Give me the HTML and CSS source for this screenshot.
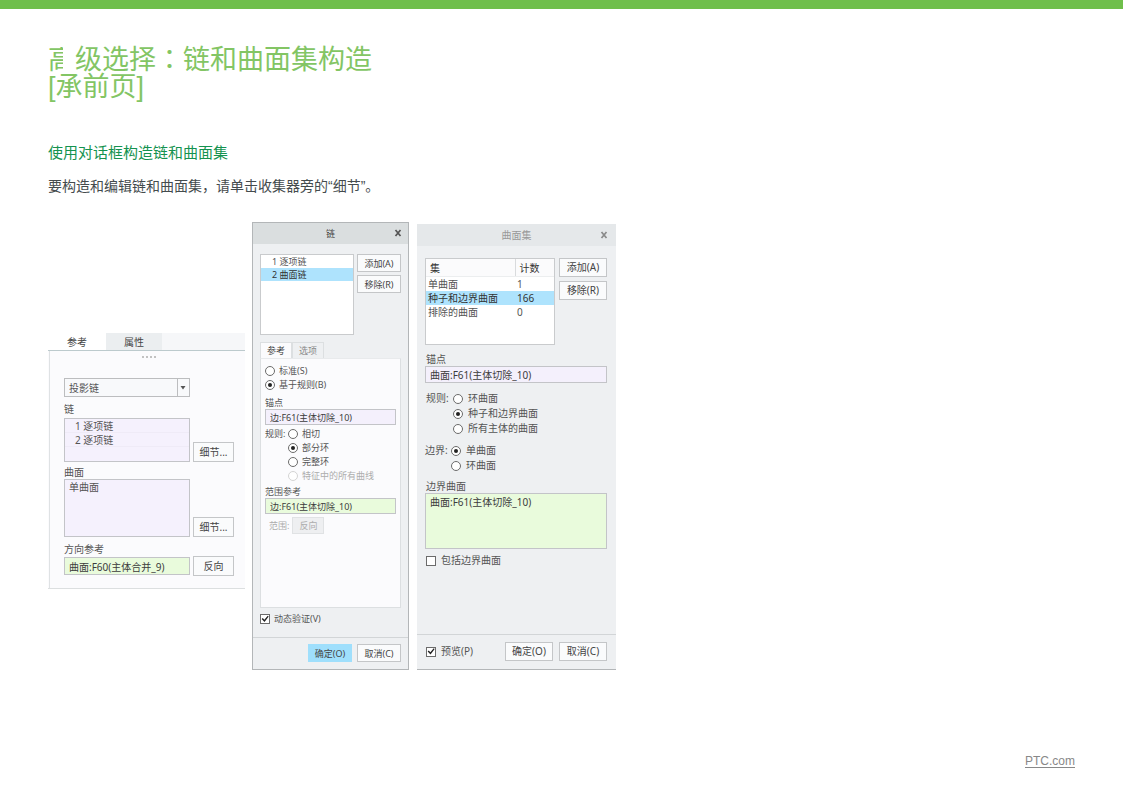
FILE: index.html
```html
<!DOCTYPE html>
<html lang="zh-CN">
<head>
<meta charset="utf-8">
<meta name="viewport" content="width=device-width, initial-scale=1">
<title>高级选择：链和曲面集构造</title>
<link rel="stylesheet" href="styles.css">
</head>
<body>
<main class="content">
  <h1 class="title"><span class="title-cut">高</span>级选择<span class="mid" lang="zh-TW">：</span>链和曲面集构造<br>[承前页]</h1>
  <h2 class="subtitle">使用对话框构造链和曲面集</h2>
  <p class="intro">要构造和编辑链和曲面集，请单击收集器旁的<span class="quote">“</span>细节<span class="quote">”</span>。</p>

  <div class="dialogs">
    <section class="panel" aria-label="参考">
      <div class="panel-tabs" role="tablist">
        <button class="panel-tab panel-tab-on" role="tab" aria-selected="true">参考</button>
        <button class="panel-tab" role="tab" aria-selected="false">属性</button>
      </div>
      <div class="panel-body">
        <div class="grip"><i></i><i></i><i></i><i></i></div>
        <div class="pick">
          <select class="pick-select" aria-label="链类型"><option>投影链</option></select>
          <svg class="pick-arrow" viewBox="0 0 12 17" aria-hidden="true"><path d="M0.5 0V17" stroke="#bcbdbf"/><path d="M3.500 7H8.500L6 10.500Z" fill="#555"/></svg>
        </div>
        <div class="label label-first" id="p-chain">链</div>
        <div class="pair">
          <ul class="collector chain-list" aria-labelledby="p-chain"><li>1 逐项链</li><li>2 逐项链</li></ul>
          <button class="btn">细节...</button>
        </div>
        <div class="label label-second" id="p-surf">曲面</div>
        <div class="pair">
          <ul class="collector surf-list" aria-labelledby="p-surf"><li>单曲面</li></ul>
          <button class="btn">细节...</button>
        </div>
        <label class="label label-third" for="p-dir">方向参考</label>
        <div class="pair pair-center">
          <input class="field green" id="p-dir" value="曲面:F60(主体合并_9)">
          <button class="btn">反向</button>
        </div>
      </div>
    </section>

    <section class="dialog chain" aria-label="链">
      <header class="bar">链<button class="close" aria-label="关闭"><svg viewBox="0 0 8 8"><path d="M1.500 1L6.500 7M6.500 1L1.500 7" stroke="#555" stroke-width="1.700"/></svg></button></header>
      <div class="dialog-body">
        <div class="top">
          <ul class="list"><li>1 逐项链</li><li class="picked">2 曲面链</li></ul>
          <div class="actions"><button class="btn">添加(A)</button><button class="btn">移除(R)</button></div>
        </div>
        <div class="tabs" role="tablist">
          <button class="tab tab-on" role="tab" aria-selected="true">参考</button>
          <button class="tab" role="tab" aria-selected="false">选项</button>
        </div>
        <div class="box">
          <label class="option"><input type="radio" name="kind">标准(S)</label>
          <label class="option"><input type="radio" name="kind" checked>基于规则(B)</label>
          <label class="label" for="c-anchor">锚点</label>
          <input class="field lilac" id="c-anchor" value="边:F61(主体切除_10)">
          <div class="rules">
            <span class="rules-name">规则:</span>
            <div role="radiogroup" aria-label="规则">
              <label class="option"><input type="radio" name="rule">相切</label>
              <label class="option"><input type="radio" name="rule" checked>部分环</label>
              <label class="option"><input type="radio" name="rule">完整环</label>
              <label class="option off"><input type="radio" name="rule" disabled>特征中的所有曲线</label>
            </div>
          </div>
          <label class="label label-extent" for="c-extent">范围参考</label>
          <input class="field green" id="c-extent" value="边:F61(主体切除_10)">
          <div class="extent off"><span>范围:</span><button class="btn" disabled>反向</button></div>
        </div>
        <label class="option verify"><input type="checkbox" checked>动态验证(V)</label>
      </div>
      <footer class="foot"><button class="btn primary">确定(O)</button><button class="btn">取消(C)</button></footer>
    </section>

    <section class="dialog surfset" aria-label="曲面集">
      <header class="bar">曲面集<button class="close" aria-label="关闭"><svg viewBox="0 0 8 8"><path d="M1.500 1L6.500 7M6.500 1L1.500 7" stroke="#8a8a8a" stroke-width="1.700"/></svg></button></header>
      <div class="dialog-body">
        <div class="top">
          <div class="table-box">
            <table class="sets">
              <thead><tr><th>集</th><th class="count">计数</th></tr></thead>
              <tbody>
                <tr><td>单曲面</td><td>1</td></tr>
                <tr class="picked"><td>种子和边界曲面</td><td>166</td></tr>
                <tr><td>排除的曲面</td><td>0</td></tr>
              </tbody>
            </table>
          </div>
          <div class="actions"><button class="btn">添加(A)</button><button class="btn">移除(R)</button></div>
        </div>
        <label class="label" for="s-anchor">锚点</label>
        <input class="field lilac" id="s-anchor" value="曲面:F61(主体切除_10)">
        <div class="rules">
          <span class="rules-name">规则:</span>
          <div role="radiogroup" aria-label="规则">
            <label class="option"><input type="radio" name="srule">环曲面</label>
            <label class="option"><input type="radio" name="srule" checked>种子和边界曲面</label>
            <label class="option"><input type="radio" name="srule">所有主体的曲面</label>
          </div>
        </div>
        <div class="rules bounds">
          <span class="rules-name">边界:</span>
          <div role="radiogroup" aria-label="边界">
            <label class="option"><input type="radio" name="bound" checked>单曲面</label>
            <label class="option"><input type="radio" name="bound">环曲面</label>
          </div>
        </div>
        <label class="label label-bound" for="s-bound">边界曲面</label>
        <textarea class="field green area" id="s-bound">曲面:F61(主体切除_10)</textarea>
        <label class="option include"><input type="checkbox">包括边界曲面</label>
      </div>
      <footer class="foot"><label class="option preview"><input type="checkbox" checked>预览(P)</label><button class="btn">确定(O)</button><button class="btn">取消(C)</button></footer>
    </section>
  </div>
</main>
<footer class="page-foot"><a href="#">PTC.com</a></footer>
</body>
</html>
```

FILE: styles.css
```css
* { box-sizing: border-box; }

body {
  margin: 0;
  min-height: 100vh;
  display: flex;
  flex-direction: column;
  border-top: 9px solid #6fbf4b;
  background: #fff;
  font-family: "Noto Sans", "Noto Sans CJK SC", sans-serif;
  color: #555;
}

button, input, select, textarea { font: inherit; color: inherit; margin: 0; }
ul { list-style: none; margin: 0; padding: 0; }

.content { flex: 1; padding: 38px 48px 0; }

.title {
  margin: 0;
  font: 400 27px/27px "Liberation Sans", "Noto Sans CJK SC", sans-serif;
  color: #83c564;
}
.title-cut {
  display: inline-block;
  width: 15px;
  height: 27px;
  margin-right: 12px;
  overflow: hidden;
  vertical-align: top;
}
.mid { font-family: "Noto Sans CJK TC", sans-serif; line-height: 0; }

.subtitle {
  margin: 42px 0 0;
  font: 400 15px/20px "Liberation Sans", "Noto Sans CJK SC", sans-serif;
  color: #14924f;
}
.intro {
  margin: 13px 0 0;
  font: 14px/20px "Liberation Sans", "Noto Sans CJK SC", sans-serif;
  color: #444b4d;
}
.quote { line-height: 0; }

.dialogs { display: flex; align-items: flex-start; margin-top: 26px; }

/* shared controls */
.label { display: block; line-height: 13px; }

.field {
  display: block;
  width: 100%;
  height: 16px;
  padding: 0 4px;
  border: 1px solid #c3c4c8;
  border-radius: 0;
  outline: 0;
  color: #3c3c3c;
}
.green { background: #e9fbdc; }
.lilac { background: #f4f0fc; }

.btn {
  height: 19px;
  padding: 0;
  border: 1px solid #c4c6c8;
  background: #fafbfc;
  color: #444;
  text-align: center;
  line-height: 15px;
  white-space: nowrap;
}
.primary { background: #9fdffc; border-color: #9fdffc; }

.option { display: flex; align-items: center; line-height: 14px; height: 14px; white-space: nowrap; }
.option input {
  appearance: none;
  flex: none;
  display: grid;
  place-items: center;
  width: 10px;
  height: 10px;
  margin-right: 4px;
  border: 1px solid #6b6b6b;
  background: #fff;
}
.option input[type="radio"] { border-radius: 50%; }
.option input[type="radio"]:checked::before {
  content: "";
  width: 4px;
  height: 4px;
  border-radius: 50%;
  background: #222;
}
.option input[type="checkbox"]:checked::before {
  content: "";
  width: 8px;
  height: 8px;
  background: #222;
  clip-path: polygon(8% 50%, 22% 36%, 42% 60%, 84% 10%, 96% 20%, 44% 86%);
}
.off { color: #adadad; }
.option.off input { border-color: #d4d4d4; }
.picked { background: #aee3fd; color: #333; }

/* reference panel */
.panel {
  flex: 0 1 197px;
  margin: 111px 7px 0 0;
  background: #fbfbfd;
  border-bottom: 1px solid #dcdfe0;
  font-size: 10px;
}
.panel-tabs { display: flex; background: #f6f7f9; border-bottom: 1px solid #bccacd; }
.panel-tab {
  flex: 0 0 56px;
  height: 17px;
  padding: 0;
  border: 0;
  background: #ebeef0;
  color: #444;
  line-height: 18px;
}
.panel-tab-on { flex-basis: 58px; background: #fff; }
.panel-body { margin-left: 1px; padding: 0 11px 12px 14px; border-left: 1px solid #dfe2e4; }
.grip { display: flex; justify-content: center; gap: 2px; height: 27px; padding: 5px 0 0; }
.grip i { width: 2px; height: 2px; background: #c2c2c2; }
.pick { position: relative; margin-right: 44px; }
.pick-select {
  appearance: none;
  display: block;
  width: 100%;
  height: 19px;
  padding: 0 16px 0 4px;
  border: 1px solid #bcbdbf;
  border-radius: 0;
  background: #f8f9fb;
}
.pick-arrow { position: absolute; top: 1px; right: 1px; width: 12px; height: 17px; pointer-events: none; }
.panel .label { line-height: 14px; }
.label-first { margin: 5px 0 2px; }
.label-second { margin-top: 3px; }
.label-third { margin-top: 5px; }
.pair { display: grid; grid-template-columns: 1fr 41px; gap: 3px; align-items: end; }
.pair-center { align-items: center; }
.pair .field { height: 18px; }
.pair .btn { height: 20px; }
.collector { border: 1px solid #c3c4c8; background: #f5f1fd; line-height: 14px; }
.chain-list { height: 44px; }
.chain-list li { padding-left: 10px; border-bottom: 1px solid #efebf7; height: 14px; }
.surf-list { height: 58px; padding-left: 4px; }

/* dialogs */
.dialog { display: flex; flex-direction: column; background: #eef0f2; }
.bar { position: relative; text-align: center; }
.close {
  position: absolute;
  top: 6px;
  right: 6px;
  width: 8px;
  height: 8px;
  padding: 0;
  border: 0;
  background: none;
}
.close svg { display: block; }
.dialog-body { flex: 1; }
.top { display: grid; }
.actions { display: grid; align-content: start; }
.rules { display: flex; }
.rules-name { flex: none; white-space: nowrap; }
.foot { display: flex; justify-content: flex-end; border-top: 1px solid #d2d5d7; }

/* chain dialog */
.chain {
  flex: 0 1 157px;
  margin-right: 8px;
  min-height: 448px;
  border: 1px solid #b3b6b8;
  font-size: 9px;
}
.chain .bar { height: 21px; line-height: 21px; background: #dadedf; color: #444; }
.chain .dialog-body { padding: 10px 7px 0; }
.chain .top { grid-template-columns: 1fr 44px; gap: 3px; }
.list { height: 81px; border: 1px solid #c9cbcd; background: #fff; line-height: 13px; }
.list li { padding-left: 11px; }
.chain .actions { gap: 3px; }
.chain .btn { height: 18px; }
.tabs { display: flex; margin-top: 7px; }
.tab {
  width: 32px;
  height: 16px;
  padding: 0;
  border: 1px solid #dcdfe1;
  border-bottom: 0;
  background: #eef0f2;
  color: #888;
  line-height: 15px;
}
.tab-on { background: #fbfbfd; color: #444; }
.box { min-height: 250px; padding: 5px 4px; border: 1px solid #dcdfe1; border-top-color: #e8eaec; background: #fbfbfd; }
.chain .box .label { margin-top: 4px; }
.chain .rules { margin-top: 2px; }
.chain .rules-name { width: 23px; line-height: 14px; }
.chain .box .label-extent { margin-top: 2px; }
.extent { display: flex; align-items: center; gap: 3px; margin-top: 3px; padding-left: 4px; }
.chain .extent .btn { width: 32px; height: 17px; background: #eeeff1; border-color: #e0e2e4; color: #adadad; }
.verify { margin-top: 4px; }
.chain .foot { gap: 5px; padding: 6px 7px 7px; }
.chain .foot .btn { width: 44px; }

/* surface set dialog */
.surfset {
  flex: 0 1 199px;
  margin-top: 2px;
  min-height: 446px;
  border-bottom: 1px solid #b3b6b8;
  font-size: 10px;
}
.surfset .bar { height: 22px; line-height: 22px; background: #e5e8ea; color: #999; }
.surfset .close { top: 7px; right: 8px; }
.surfset .dialog-body { padding: 12px 9px 0 8px; }
.surfset .top { grid-template-columns: 1fr 48px; gap: 4px; }
.surfset .actions { gap: 4px; }
.table-box { height: 87px; border: 1px solid #c9cbcd; background: #fff; }
.sets { width: 100%; border-collapse: collapse; line-height: 14px; }
.sets th { height: 17px; padding: 2px 4px 0; text-align: left; font-weight: 400; color: #333; background: #fbfbfc; border-bottom: 1px solid #eceeef; }
.sets td { height: 14px; padding: 0 2px; }
.sets .count { width: 39px; border-left: 1px solid #d9dbdd; }
.surfset .label { margin-top: 8px; padding-left: 1px; }
.surfset .field { height: 17px; }
.surfset .rules { margin-top: 8px; padding-left: 1px; }
.surfset .rules-name { width: 27px; line-height: 15px; }
.surfset .option { height: 15px; line-height: 15px; }
.surfset .option input { margin-right: 5px; }
.surfset .bounds { margin-top: 7px; padding-left: 0; }
.surfset .bounds .rules-name { width: 26px; }
.surfset .label-bound { margin-top: 7px; }
.surfset .area { height: 56px; padding: 1px 4px; line-height: 15px; resize: none; overflow: hidden; }
.surfset .include { margin-top: 4px; padding-left: 1px; }
.surfset .foot { gap: 6px; padding: 7px 9px 8px; }
.surfset .foot .btn { width: 48px; }
.surfset .preview { margin: 2px auto 0 0; }

.page-foot {
  padding: 0 48px 23px;
  text-align: right;
  font: 12px/20px "Liberation Sans", sans-serif;
}
.page-foot a { color: #888; text-underline-offset: 2px; }
```
